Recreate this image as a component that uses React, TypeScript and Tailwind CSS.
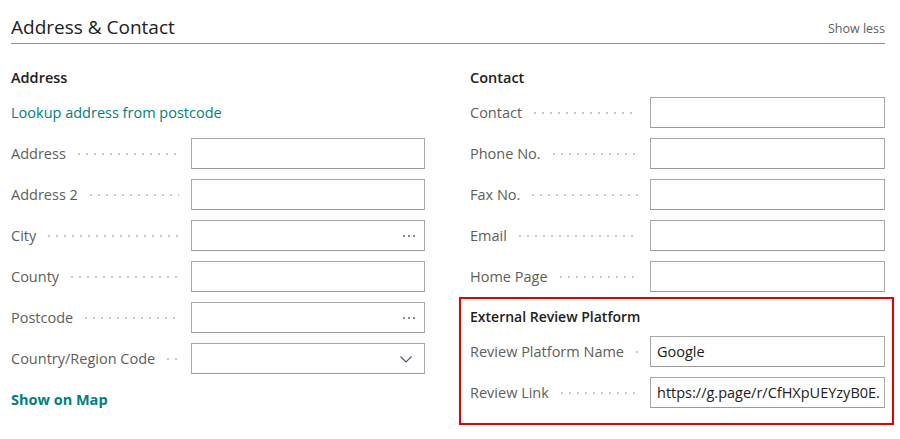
import React from "react";

const font = { fontFamily: '"Open Sans", "Noto Sans", sans-serif' };

function Dots() {
  return (
    <div className="ml-[9px] mr-[12px] h-[2px] flex-1 self-center bg-[radial-gradient(circle,#c8c8c8_0.8px,transparent_1px)] bg-[length:8px_2px] bg-repeat-x" />
  );
}

function Field({
  label,
  value,
  suffix,
}: {
  label: string;
  value?: string;
  suffix?: "dots" | "chevron";
}) {
  return (
    <div className="flex h-[31px] items-center">
      <div className="flex w-[180px] shrink-0 items-center">
        <span className="whitespace-nowrap text-[14.5px] text-[#605e5c]">{label}</span>
        <Dots />
      </div>
      <div className="flex h-[31px] min-w-0 flex-1 items-center border border-[#a8a8a8] border-b-[#9a9a9a] bg-white px-[6px]">
        <span className="min-w-0 flex-1 whitespace-nowrap text-[14.5px] text-[#212121]">
          {value}
        </span>
        {suffix === "dots" && (
          <svg width="14" height="4" viewBox="0 0 14 4" className="mr-[2px]">
            <circle cx="2" cy="2" r="1" fill="#5b6574" />
            <circle cx="7" cy="2" r="1" fill="#5b6574" />
            <circle cx="12" cy="2" r="1" fill="#5b6574" />
          </svg>
        )}
        {suffix === "chevron" && (
          <svg width="14" height="14" viewBox="0 0 14 14" className="mr-[5px]">
            <path d="M1.5 4.5 L7 10 L12.5 4.5" fill="none" stroke="#505c6d" strokeWidth="1.1" />
          </svg>
        )}
      </div>
    </div>
  );
}

export default function App() {
  return (
    <div className="h-[439px] w-[900px] bg-white" style={font}>
      <div className="ml-[11px] w-[874px] pt-[14px]">
        <div className="flex items-end justify-between border-b border-[#8a8f99] pb-[3px]">
          <span className="text-[19px] leading-[26px] text-[#212121]">Address &amp; Contact</span>
          <span className="mb-[1px] text-[12.5px] text-[#605e5c]">Show less</span>
        </div>
        <div className="mt-[23px] grid grid-cols-[414px_415px] gap-x-[45px]">
          <div className="flex flex-col">
            <div className="mb-[8px] text-[14.5px] font-semibold leading-[22px] text-[#212121]">Address</div>
            <div className="flex flex-col gap-[10px]">
              <div className="flex h-[31px] items-center text-[14.5px] text-[#00807e]">
                Lookup address from postcode
              </div>
              <Field label="Address" />
              <Field label="Address 2" />
              <Field label="City" suffix="dots" />
              <Field label="County" />
              <Field label="Postcode" suffix="dots" />
              <Field label="Country/Region Code" suffix="chevron" />
              <div className="flex h-[31px] items-center text-[14.5px] font-bold text-[#00807e]">
                Show on Map
              </div>
            </div>
          </div>
          <div className="flex flex-col">
            <div className="mb-[8px] text-[14.5px] font-semibold leading-[22px] text-[#212121]">Contact</div>
            <div className="flex flex-col gap-[10px]">
              <Field label="Contact" />
              <Field label="Phone No." />
              <Field label="Fax No." />
              <Field label="Email" />
              <Field label="Home Page" />
            </div>
            <div className="relative mt-[15px] flex flex-col">
              <div className="pointer-events-none absolute -left-[11px] -right-[9px] -top-[10px] -bottom-[17px] border-2 border-[#e60000]" />
              <div className="mb-[9px] text-[14px] font-semibold leading-[20px] text-[#212121]">
                External Review Platform
              </div>
              <div className="flex flex-col gap-[10px]">
                <Field label="Review Platform Name" value="Google" />
                <Field label="Review Link" value="https://g.page/r/CfHXpUEYzyB0E." />
              </div>
            </div>
          </div>
        </div>
      </div>
    </div>
  );
}
